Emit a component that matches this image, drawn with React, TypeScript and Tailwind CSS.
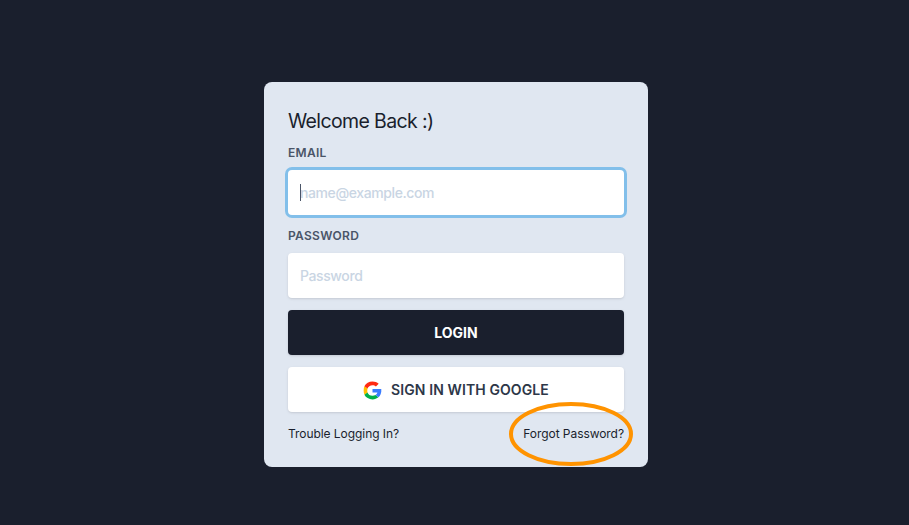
import React from "react";

function GoogleLogo() {
  return (
    <svg className="mr-[9px] h-[19px] w-[19px] shrink-0" viewBox="0 0 48 48" aria-hidden="true">
      <path fill="#ffbf00" d="M11.5 29.4A14 14 0 0 1 10.8 24c0-1.9.3-3.700.8-5.400L3.500 13.200A23 23 0 0 0 1.600 24c0 3.900.7 7.600 2 10.900z" />
      <path fill="#ff2a12" d="M24 10.500c3.600 0 6.400 1.300 8.700 3.400l6.900-6.700C35.500 3.500 30 1.500 24 1.500 15 1.500 7.300 6 3.500 13.200l8 5.800C13.200 14 18 10.500 24 10.500z" />
      <path fill="#00b04a" d="M24 46.500c6 0 11-1.900 15-5.200l-7.500-6c-2.200 1.400-4.700 2.100-7.500 2.100-6.100 0-10.900-3.500-12.700-8.500l-7.800 6C7.300 42 15 46.500 24 46.500z" />
      <path fill="#3b7cff" d="M46.200 20H24v8.800h12.400c-.7 2.900-2.500 5.100-4.900 6.500l7.500 6c4.900-4.500 8.200-11.200 7.200-21.300z" />
    </svg>
  );
}

const field =
  "h-[45px] w-full rounded bg-white px-3 text-sm font-medium leading-normal tracking-[-0.4px] text-[#4a5568] outline-none placeholder:text-[#c9d5e3]";
const label = "block text-xs font-semibold uppercase leading-[18px] tracking-[0.3px] text-[#4a5568]";

export default function App() {
  return (
    <main className="flex h-[525px] w-full justify-center overflow-hidden bg-[#1a1f2d] pt-[82px] pl-[3px] font-['Inter',sans-serif]">
      <form className="h-[385px] w-[384px] rounded-lg bg-[#e0e7f1] px-6 pt-6">
        <h1 className="text-[19.5px] leading-[30px] tracking-[-0.62px] text-[#1a1f2d]">Welcome Back :)</h1>
        <div className="pt-2">
          <label className={label}>Email</label>
          <div className="relative mt-2">
            <input className={`${field} block shadow-[0_0_0_3px_#82bfea]`} type="email" placeholder="name@example.com" />
            <span className="absolute top-[14px] left-3 h-[17px] w-px bg-[#4a5568]" />
          </div>
        </div>
        <div className="mt-3">
          <label className={label}>Password</label>
          <input className={`${field} mt-2 block shadow-sm`} type="password" placeholder="Password" />
        </div>
        <button type="button" className="mt-3 flex h-[45px] w-full items-center justify-center rounded bg-[#1a1f2d] pt-px text-sm font-bold text-white shadow-sm">
          LOGIN
        </button>
        <button type="button" className="mt-3 flex h-[45px] w-full items-center justify-center rounded bg-white pt-px text-sm font-semibold tracking-[0.1px] text-[#2d3748] shadow-sm">
          <GoogleLogo />
          SIGN IN WITH GOOGLE
        </button>
        <div className="mt-[13px] flex justify-between text-xs leading-[18px] tracking-[-0.06px] text-[#1a1f2d]">
          <a>Trouble Logging In?</a>
          <div className="relative">
            <a>Forgot Password?</a>
            <svg className="pointer-events-none absolute top-[-24px] right-[-10px] h-[66px] w-[126px]" viewBox="0 0 126 66">
              <ellipse cx="63" cy="33" rx="60" ry="30" fill="none" stroke="#ff9300" strokeWidth="4" />
            </svg>
          </div>
        </div>
      </form>
    </main>
  );
}
